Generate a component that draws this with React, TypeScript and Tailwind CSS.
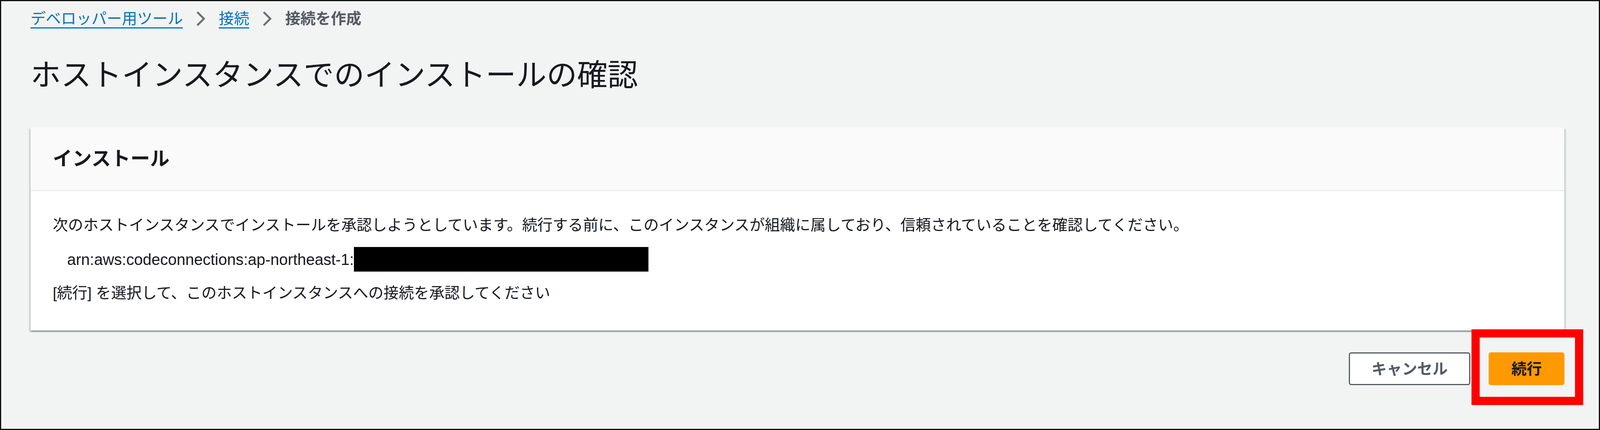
import React from 'react'

// Breadcrumb chevron separator
function Chevron() {
  return (
    <svg width="24" height="40" viewBox="0 0 24 40" className="mx-[34px] shrink-0">
      <polyline points="3,3 20,20 3,37" fill="none" stroke="#687078" strokeWidth="5" />
    </svg>
  )
}

export default function App() {
  return (
    <div className="w-full h-[1102px] box-border border-[3px] border-[#111] bg-[#f2f3f3] pl-[75px] pr-[88px] font-['Liberation_Sans','Noto_Sans_CJK_JP',sans-serif] text-[#16191f] overflow-hidden">
      {/* Breadcrumbs */}
      <nav className="flex items-center pt-[17px] h-[73px] text-[39px] leading-[58px]">
        <a className="text-[#0073bb] underline decoration-[3px] underline-offset-[9px]">デベロッパー用ツール</a>
        <Chevron />
        <a className="text-[#0073bb] underline decoration-[3px] underline-offset-[9px]">接続</a>
        <Chevron />
        <span className="text-[#545b64] font-bold">接続を作成</span>
      </nav>

      {/* Page title */}
      <h1 className="mt-[67px] text-[78px] leading-[100px] font-normal text-[#16191f]">
        ホストインスタンスでのインストールの確認
      </h1>

      {/* Card */}
      <div className="mt-[84px] bg-white shadow-[0_3px_3px_0_rgba(0,28,36,0.3),3px_3px_3px_0_rgba(0,28,36,0.15),-3px_3px_3px_0_rgba(0,28,36,0.15)]">
        <div className="h-[163px] flex items-center px-[57px] bg-[#fafafa] border-b-[3px] border-[#eaeded]">
          <h2 className="text-[50px] font-bold leading-[60px]">インストール</h2>
        </div>
        <div className="px-[57px] pt-[58px] pb-[67px] text-[39px]">
          <p className="leading-[58px]">
            次のホストインスタンスでインストールを承認しようとしています。続行する前に、このインスタンスが組織に属しており、信頼されていることを確認してください。
          </p>
          <div className="mt-[27px] h-[63px] flex items-center pl-[37px]">
            <span className="text-[40px] leading-[58px]">arn:aws:codeconnections:ap-northeast-1:</span>
            <span className="block w-[754px] h-[63px] bg-black" />
          </div>
          <p className="mt-[26px] leading-[58px]">
            [続行] を選択して、このホストインスタンスへの接続を承認してください
          </p>
        </div>
      </div>

      {/* Actions */}
      <div className="mt-[56px] flex justify-end items-center gap-[47px]">
        <button className="h-[84px] px-[55px] border-[3px] border-[#545b64] rounded-[6px] bg-white text-[39px] font-bold text-[#545b64] leading-none">
          キャンセル
        </button>
        <div className="relative">
          <button className="h-[84px] px-[55px] border-[3px] border-[#ff9900] rounded-[6px] bg-[#ff9900] text-[39px] font-bold text-[#16191f] leading-none">
            続行
          </button>
          <div className="absolute left-[-44px] top-[-59px] right-[-48px] bottom-[-51px] border-[21px] border-[#ff0000] pointer-events-none" />
        </div>
      </div>
    </div>
  )
}
